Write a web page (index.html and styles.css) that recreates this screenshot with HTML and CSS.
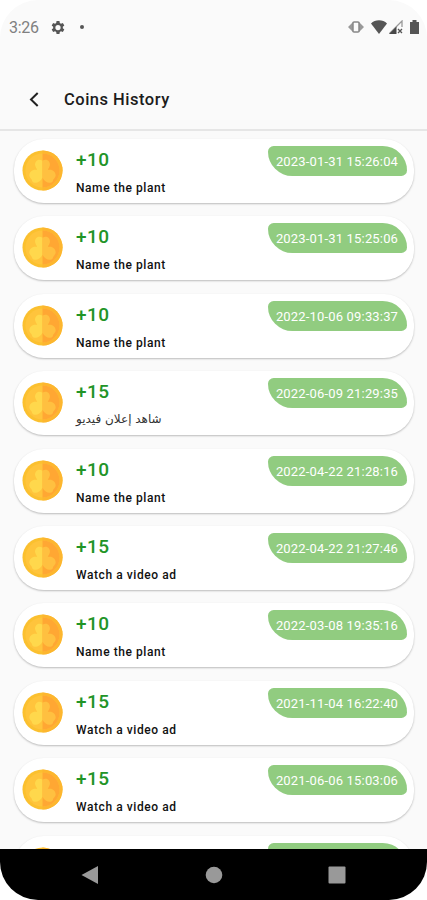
FILE: index.html
```html
<!DOCTYPE html>
<html lang="en">
<head>
<meta charset="utf-8">
<title>Coins History</title>
<link rel="stylesheet" href="styles.css">
</head>
<body>
<svg class="defs" width="0" height="0" aria-hidden="true">
  <symbol id="coin" viewBox="0 0 42 42">
    <circle cx="21" cy="21" r="20.5" fill="#fbc02f"/>
    <path d="M21 .5a20.5 20.5 0 0 1 0 41z" fill="#fdb62f"/>
    <circle cx="21" cy="21" r="17.5" fill="#ffc43c"/>
    <path d="M21 3.500a17.500 17.500 0 0 1 0 35z" fill="#ffa733"/>
    <path d="M21 11C17 8 12.500 11.500 13.500 16C14 18 15 19 15.500 20.500C11 19.500 7.500 22 7.500 26.500C8 29 10 29.500 10.500 32C12 34.500 18 34.500 21 28.500z" fill="#ffd84c"/>
    <path d="M21 11C25 8 29.500 11.500 28.500 16C28 18 27 19 26.500 20.500C31 19.500 34.500 22 34.500 26.500C34 29 32 29.500 31.500 32C30 34.500 24 34.500 21 28.500z" fill="#ffc040"/>
  </symbol>
</svg>
<div class="phone">
  <header class="status">
    <span class="time">3:26</span>
    <svg class="gear" viewBox="0 0 24 24"><path fill="#555" fill-rule="evenodd" d="M9.500 1h5l.6 3.200 2 1.200 3.200-1.100 2.500 4.300-2.500 2.200v2.400l2.500 2.200-2.500 4.300-3.200-1.100-2 1.200-.6 3.200h-5l-.6-3.200-2-1.200-3.200 1.100-2.500-4.300 2.500-2.200v-2.400L1.200 8.600l2.500-4.300 3.200 1.100 2-1.200zM12 7.500a4.500 4.500 0 1 0 0 9a4.500 4.500 0 0 0 0-9z"/></svg>
    <span class="dot"></span>
    <span class="spacer"></span>
    <svg class="vibrate" viewBox="0 0 16 12"><path d="M0 6l5-5v10zM16 6l-5-5v10z" fill="#999"/><rect x="5" y="1" width="6" height="10" rx="1" fill="#fafafa" stroke="#888" stroke-width="1.500"/></svg>
    <svg class="wifi" viewBox="0 0 16 14"><path d="M0 3.500C4-.8 12-.8 16 3.500L8 14z" fill="#555"/></svg>
    <svg class="signal" viewBox="0 0 14 14"><path d="M.5 13.500L13 1v6" fill="none" stroke="#999" stroke-width="1.300"/><path d="M0 14L7.500 6.500V14z" fill="#484848"/><path d="M9 9l4 4m0-4l-4 4" stroke="#555" stroke-width="1.300"/></svg>
    <svg class="battery" viewBox="0 0 9 14"><path d="M0 2h2.500V0h4v2H9v12H0z" fill="#555"/></svg>
  </header>
  <nav class="appbar">
    <svg class="back" viewBox="0 0 10 15"><path d="M8.700 1L2 7.500 8.700 14" fill="none" stroke="#222" stroke-width="2"/></svg>
    <h1>Coins History</h1>
  </nav>
  <main class="list">
    <article class="card"><svg class="coin"><use href="#coin"/></svg><div class="info"><b>+10</b><p>Name the plant</p></div><time>2023-01-31 15:26:04</time></article>
    <article class="card"><svg class="coin"><use href="#coin"/></svg><div class="info"><b>+10</b><p>Name the plant</p></div><time>2023-01-31 15:25:06</time></article>
    <article class="card"><svg class="coin"><use href="#coin"/></svg><div class="info"><b>+10</b><p>Name the plant</p></div><time>2022-10-06 09:33:37</time></article>
    <article class="card"><svg class="coin"><use href="#coin"/></svg><div class="info"><b>+15</b><p class="arabic" lang="ar" dir="rtl">شاهد إعلان فيديو</p></div><time>2022-06-09 21:29:35</time></article>
    <article class="card"><svg class="coin"><use href="#coin"/></svg><div class="info"><b>+10</b><p>Name the plant</p></div><time>2022-04-22 21:28:16</time></article>
    <article class="card"><svg class="coin"><use href="#coin"/></svg><div class="info"><b>+15</b><p>Watch a video ad</p></div><time>2022-04-22 21:27:46</time></article>
    <article class="card"><svg class="coin"><use href="#coin"/></svg><div class="info"><b>+10</b><p>Name the plant</p></div><time>2022-03-08 19:35:16</time></article>
    <article class="card"><svg class="coin"><use href="#coin"/></svg><div class="info"><b>+15</b><p>Watch a video ad</p></div><time>2021-11-04 16:22:40</time></article>
    <article class="card"><svg class="coin"><use href="#coin"/></svg><div class="info"><b>+15</b><p>Watch a video ad</p></div><time>2021-06-06 15:03:06</time></article>
    <article class="card"><svg class="coin"><use href="#coin"/></svg><div class="info"></div><time></time></article>
  </main>
  <footer class="navbar">
    <svg viewBox="0 0 18 20"><path d="M.5 10L17 1v18z" fill="#999"/></svg>
    <svg viewBox="0 0 18 20"><circle cx="9" cy="10" r="8.300" fill="#999"/></svg>
    <svg viewBox="0 0 18 20"><rect x=".5" y="1.500" width="17" height="17" rx="1" fill="#999"/></svg>
  </footer>
</div>
</body>
</html>
```
FILE: styles.css
```css
* { box-sizing: border-box; }
body { margin: 0; background: #fff; font-family: Roboto, "DejaVu Sans", sans-serif; }
.defs { display: block; }
.phone {
  width: 427px;
  height: 900px;
  display: flex;
  flex-direction: column;
  overflow: hidden;
  border-radius: 38px;
  background: #fafafa;
}
.status {
  height: 56px;
  flex: none;
  display: flex;
  align-items: center;
  padding: 0 8px 2px 9px;
}
.time { width: 42px; padding-top: 1px; font-size: 16px; color: #808080; letter-spacing: -.3px; }
.gear { width: 14px; height: 15px; }
.dot { width: 4px; height: 4px; margin-left: 15px; border-radius: 50%; background: #555; }
.spacer { flex: 1; }
.vibrate { width: 16px; height: 12px; margin-right: 7px; }
.wifi { width: 16px; height: 14px; margin-right: 2px; }
.signal { width: 14px; height: 14px; margin-right: 7px; }
.battery { width: 9px; height: 14px; }
.appbar {
  height: 75px;
  flex: none;
  display: flex;
  align-items: center;
  padding: 13px 0 0 29px;
  border-bottom: 2px solid #e6e6e6;
}
.back { width: 10px; height: 15px; margin-right: 25px; }
h1 { margin: 0; padding-top: 1px; font-size: 16.5px; line-height: 20px; font-weight: 500; color: #1c1c1c; letter-spacing: .5px; }
.list {
  height: 718px;
  flex: none;
  overflow: hidden;
  display: flex;
  flex-direction: column;
  gap: 13.4px;
  padding: 8px 13.5px 0 14px;
}
.card {
  height: 64px;
  flex: none;
  display: flex;
  align-items: flex-start;
  padding: 7px 7px 0 8px;
  border-radius: 30px;
  background: #fff;
  box-shadow: 0 1px 2px rgba(0, 0, 0, .25);
}
.coin { width: 41px; height: 41px; margin: 4px 13px 0 0; }
.info { flex: 1; display: flex; flex-direction: column; align-items: flex-start; }
.info b { margin-top: 2px; font-size: 19px; line-height: 24px; font-weight: 500; color: #219427; letter-spacing: .4px; }
.info p { margin: 8px 0 0; font-size: 12px; line-height: 16px; font-weight: 500; color: #111; letter-spacing: .57px; white-space: nowrap; }
.info .arabic { margin-top: 7px; font-family: "DejaVu Sans", sans-serif; font-size: 12px; font-weight: 400; letter-spacing: 0; color: #333; }
time {
  width: 139px;
  height: 30px;
  border-radius: 6px 26px 6px 26px;
  background: #91cc80;
  color: #fff;
  font-size: 13px;
  line-height: 31px;
  letter-spacing: .17px;
  text-align: center;
  white-space: nowrap;
}
.navbar {
  flex: 1;
  display: flex;
  align-items: center;
  justify-content: space-between;
  padding: 0 81px;
  background: #000;
}
.navbar svg { width: 18px; height: 20px; }
```
